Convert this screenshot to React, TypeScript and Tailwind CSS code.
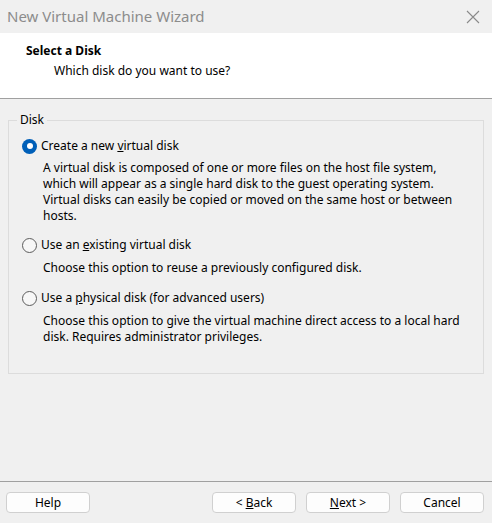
import React from "react";

const font = { fontFamily: '"Noto Sans", "Segoe UI", sans-serif' };

function Radio({ checked }: { checked?: boolean }) {
  return checked ? (
    <span className="flex h-[15px] w-[15px] shrink-0 items-center justify-center rounded-full bg-[#005fb8]">
      <span className="h-[6px] w-[6px] rounded-full bg-white" />
    </span>
  ) : (
    <span className="h-[15px] w-[15px] shrink-0 rounded-full border border-[#5c5c5c] bg-[#f7f7f7]" />
  );
}

function Button({ children }: { children: React.ReactNode }) {
  return (
    <button className="flex h-[21px] w-[84px] items-center justify-center rounded-[4px] border border-[#d0d0d0] bg-[#fdfdfd] text-[12px] text-black">
      <span className="whitespace-pre">{children}</span>
    </button>
  );
}

export default function App() {
  return (
    <div className="flex h-[523px] w-[492px] flex-col bg-[#f0f0f0] text-[12px] text-black" style={font}>
      <div className="flex h-[33px] shrink-0 items-center justify-between bg-[#f0f0f0] pl-[7px] pr-[12px]">
        <span className="text-[15px] text-[#8c8c8c]">New Virtual Machine Wizard</span>
        <svg width="14" height="14" viewBox="0 0 14 14">
          <path d="M1 1 L13 13 M13 1 L1 13" stroke="#8a8a8a" strokeWidth="1.1" />
        </svg>
      </div>
      <div className="h-[66px] shrink-0 border-b border-[#a0a0a0] bg-white pl-[26px] pt-[10px]">
        <div className="font-bold leading-[16px]">Select a Disk</div>
        <div className="pl-[28px] pt-[4px] leading-[16px]">Which disk do you want to use?</div>
      </div>
      <div className="flex-1 px-[8px] pt-[14px]">
        <fieldset className="h-[261px] rounded-none border border-[#dcdcdc] px-[13px] pb-0 pt-0">
          <legend className="ml-[-5px] px-[3px] leading-[14px]">Disk</legend>
          <div className="mt-[10px] flex items-center gap-[4px]">
            <Radio checked />
            <span>
              Create a new <u>v</u>irtual disk
            </span>
          </div>
          <div className="mt-[5px] pl-[21px] leading-[16px]">
            A virtual disk is composed of one or more files on the host file system,
            <br />
            which will appear as a single hard disk to the guest operating system.
            <br />
            Virtual disks can easily be copied or moved on the same host or between
            <br />
            hosts.
          </div>
          <div className="mt-[12px] flex items-center gap-[4px]">
            <Radio />
            <span>
              Use an <u>e</u>xisting virtual disk
            </span>
          </div>
          <div className="mt-[6px] pl-[21px] leading-[16px]">
            Choose this option to reuse a previously configured disk.
          </div>
          <div className="mt-[13px] flex items-center gap-[4px]">
            <Radio />
            <span>
              Use a <u>p</u>hysical disk (for advanced users)
            </span>
          </div>
          <div className="mt-[6px] pl-[21px] leading-[16px]">
            Choose this option to give the virtual machine direct access to a local hard
            <br />
            disk. Requires administrator privileges.
          </div>
        </fieldset>
      </div>
      <div className="h-[42px] shrink-0 border-t border-[#a0a0a0] pl-[6px] pr-[8px] pt-[10px]">
        <div className="flex items-center">
          <Button>Help</Button>
          <div className="flex-1" />
          <div className="flex gap-[10px]">
            <Button>
              {"< "}
              <u>B</u>ack
            </Button>
            <Button>
              <u>N</u>ext{" >"}
            </Button>
            <Button>Cancel</Button>
          </div>
        </div>
      </div>
    </div>
  );
}
